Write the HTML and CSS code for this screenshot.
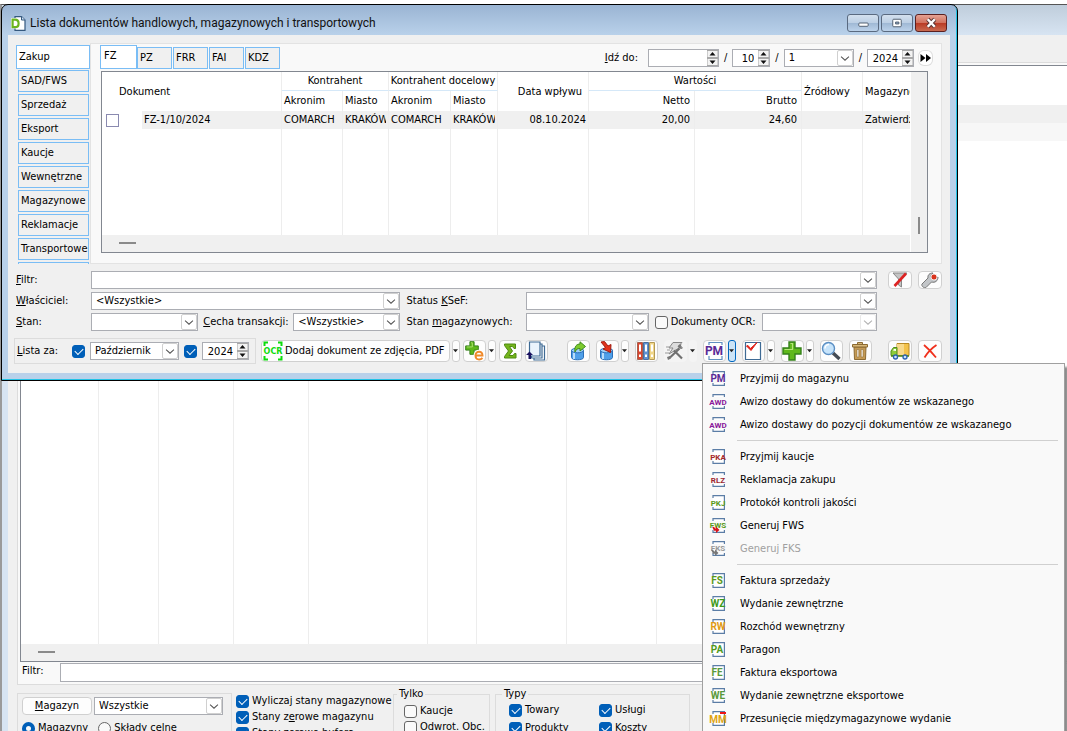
FILE: index.html
```
<!DOCTYPE html>
<html lang="pl">
<head>
<meta charset="utf-8">
<title>Lista dokumentów handlowych, magazynowych i transportowych</title>
<link rel="stylesheet" href="styles.css">
</head>
<body>
<svg class="defs" aria-hidden="true">
  <symbol id="chev" viewBox="0 0 16 16"><path d="M3.500 6.500l4.500 4 4.500-4" fill="none" stroke="#555" stroke-width="1.200"/></symbol>
  <symbol id="spin" viewBox="0 0 11 16"><path d="M0 .5h11v7H0zM0 8.500h11v7H0z" fill="#f3f3f3" stroke="#a8a8a8"/><path d="M5.500 2l3 3.500h-6zM5.500 14l3-3.500h-6z" fill="#111"/></symbol>
  <symbol id="drop" viewBox="0 0 6 4"><path d="M0 0h6L3 3.500z" fill="#222"/></symbol>
  <symbol id="page" viewBox="0 0 16 15"><path d="M3 3V.7h11.400V3M3 12v2.300h11.400V12" fill="#fff" stroke="#5b7da6" stroke-width="1.200"/></symbol>
  <symbol id="sheet" viewBox="0 0 16 15"><path d="M3 3V.7h11.400v13.600H3V12" fill="#fff" stroke="#5b7da6" stroke-width="1.200"/></symbol>
  <symbol id="plus" viewBox="0 0 20 20"><path d="M7 1h6v6h6v6h-6v6H7v-6H1V7h6z" fill="#5fb81c" stroke="#34801a" stroke-width="1.400"/><path d="M8.500 2.500h2V8.500h-8" fill="none" stroke="#b5e67a" stroke-width="1.200"/></symbol>
  <symbol id="drum" viewBox="0 0 20 20"><path d="M3.500 9v7.500c0 3 12 3 12 0V9z" fill="#4f9fe8" stroke="#2b6fb8"/><path d="M6 11v7" stroke="#b9ddfa" stroke-width="2"/><ellipse cx="9.500" cy="9.500" rx="6" ry="2.300" fill="#9fd0f8" stroke="#2b6fb8"/></symbol>
</svg>

<main class="desktop">
  <section class="back" aria-label="Lista towarów">
    <div class="back-title"></div>
    <div class="back-client">
      <div class="back-strip"></div>
      <div class="back-panel">
        <div class="back-list">
          <div class="back-head"></div><div class="back-row"></div><div class="back-row alt"></div>
          <div class="back-cols"><i></i><i></i><i></i><i></i><i></i><i></i><i></i><i></i><i></i></div>
          <div class="hscroll"><b></b></div>
        </div>
        <div class="back-filter"><label for="bf">Filtr:</label><input id="bf" type="text"></div>
      </div>
      <div class="options">
        <div class="box store">
          <div class="line"><button class="push" type="button"><u>M</u>agazyn</button>
          <span class="combo"><select aria-label="Magazyn"><option>Wszystkie</option></select><svg><use href="#chev"/></svg></span></div>
          <div class="radios"><label><input type="radio" name="m" checked>Magazyny</label><label><input type="radio" name="m">Składy celne</label></div>
        </div>
        <div class="checks">
          <label><input type="checkbox" checked>Wyliczaj stany magazynowe</label>
          <label><input type="checkbox" checked><span>Stany z<u>e</u>rowe magazynu</span></label>
          <label><input type="checkbox" checked>Stany zerowe bufora</label>
        </div>
        <fieldset class="only"><legend>Tylko</legend>
          <label><input type="checkbox">Kaucje</label>
          <label><input type="checkbox">Odwrot. Obc.</label>
        </fieldset>
        <fieldset class="types"><legend>Typy</legend>
          <label><input type="checkbox" checked>Towary</label><label><input type="checkbox" checked>Usługi</label>
          <label><input type="checkbox" checked>Produkty</label><label><input type="checkbox" checked>Koszty</label>
        </fieldset>
      </div>
    </div>
  </section>

  <section class="win">
    <header class="title">
      <svg class="logo" viewBox="0 0 15 15"><path d="M4 .6h6.500L14 4v10.400H4z" fill="#fff" stroke="#35597f" stroke-width="1.200"/><path d="M10.500 .6V4H14" fill="#c9dcf0" stroke="#35597f"/><path d="M0 2h5c7 0 7 10.500 0 10.500H0z" fill="#fff"/><path d="M1.600 3.600H4c4.800 0 4.800 7.600 0 7.600H1.600z" fill="none" stroke="#6cb51f" stroke-width="2.200"/></svg>
      <h1>Lista dokumentów handlowych, magazynowych i transportowych</h1>
      <button class="cap" type="button" aria-label="Minimalizuj"><svg viewBox="0 0 30 17"><rect x="10.500" y="8.500" width="10" height="3.500" rx="1" fill="#fff" stroke="#4c5a6b"/></svg></button>
      <button class="cap" type="button" aria-label="Maksymalizuj"><svg viewBox="0 0 30 17"><rect x="10.500" y="4.500" width="9" height="8" rx="1" fill="#fff" stroke="#4c5a6b"/><path d="M13.500 7.500h3.500v2h-3.500z" fill="#8fa9c6" stroke="#4c5a6b"/></svg></button>
      <button class="cap close" type="button" aria-label="Zamknij"><svg viewBox="0 0 30 17"><path d="M11.500 4.500l7.500 8M19 4.500l-7.500 8" stroke="#533" stroke-width="4.400"/><path d="M11.500 4.500l7.500 8M19 4.500l-7.500 8" stroke="#fff" stroke-width="2.600"/></svg></button>
    </header>
    <div class="client">
      <div class="work">
        <nav class="side">
          <button class="on" type="button">Zakup</button><button type="button">SAD/FWS</button><button type="button">Sprzedaż</button><button type="button">Eksport</button><button type="button">Kaucje</button><button type="button">Wewnętrzne</button><button type="button">Magazynowe</button><button type="button">Reklamacje</button><button type="button">Transportowe</button><button type="button" aria-label="Dalej"></button>
        </nav>
        <div class="panel">
          <div class="tabs">
            <button class="on" type="button">FZ</button><button type="button">PZ</button><button type="button">FRR</button><button type="button">FAI</button><button type="button">KDZ</button>
            <div class="goto">
              <label for="g1"><u>I</u>dź do:</label>
              <span class="spin w1"><input id="g1" type="text"><svg><use href="#spin"/></svg></span><span>/</span>
              <span class="spin w2"><input aria-label="Miesiąc" type="text" value="10"><svg><use href="#spin"/></svg></span><span>/</span>
              <span class="combo w3"><select aria-label="Seria"><option>1</option></select><svg><use href="#chev"/></svg></span><span>/</span>
              <span class="spin w4"><input aria-label="Rok" type="text" value="2024"><svg><use href="#spin"/></svg></span>
              <button class="go" type="button" aria-label="Przejdź"><svg viewBox="0 0 13 14"><path d="M1.500 3l5 4-5 4zM7 3l5 4-5 4z" fill="#000"/></svg></button>
            </div>
          </div>
          <div class="list">
            <div class="rows">
              <table>
                <colgroup><col class="c0"><col class="c1"><col class="c2"><col class="c3"><col class="c4"><col class="c5"><col class="c6"><col class="c7"><col class="c8"><col class="c9"><col></colgroup>
                <thead>
                  <tr><th rowspan="2" colspan="2" class="doc">Dokument</th><th colspan="2" class="grp">Kontrahent</th><th colspan="2" class="grp">Kontrahent docelowy</th><th rowspan="2" class="date">Data wpływu</th><th colspan="2" class="grp">Wartości</th><th rowspan="2">Źródłowy</th><th rowspan="2">Magazynowy</th></tr>
                  <tr><th>Akronim</th><th>Miasto</th><th>Akronim</th><th>Miasto</th><th class="num">Netto</th><th class="num">Brutto</th></tr>
                </thead>
                <tbody>
                  <tr class="data"><td class="tick"><input class="old" type="checkbox" aria-label="FZ-1/10/2024"></td><td>FZ-1/10/2024</td><td>COMARCH</td><td><div class="clip">KRAKÓW</div></td><td>COMARCH</td><td><div class="clip">KRAKÓW</div></td><td class="date">08.10.2024</td><td class="num">20,00</td><td class="num">24,60</td><td></td><td>Zatwierdzony</td></tr>
                  <tr class="rest"><td></td><td></td><td></td><td></td><td></td><td></td><td></td><td></td><td></td><td></td><td></td></tr>
                </tbody>
              </table>
              <div class="hscroll"><b></b></div>
            </div>
            <div class="vscroll"><b></b></div>
          </div>
        </div>
      </div>

      <form class="form">
        <label for="f1"><u>F</u>iltr:</label>
        <span class="combo wide"><select id="f1"><option></option></select><svg><use href="#chev"/></svg></span>
        <span class="pair">
          <button class="tool" type="button" aria-label="Wyczyść filtr"><svg viewBox="0 0 20 16"><path d="M3 1h14l-5.500 6v8l-3-2V7z" fill="#c4c4c4" stroke="#888"/><path d="M4.500 14L16 1.500" stroke="#d22" stroke-width="2.600"/></svg></button>
          <button class="tool" type="button" aria-label="Konstruktor filtra"><svg viewBox="0 0 20 16"><path d="M2 12l6-6c-.5-3 1.500-5 5-5l-2 3 1 2.500 3 .5 3-2c0 4-3 6-6.500 5L6 15.500c-2 1-5-1.500-4-3.500z" fill="#c2c5c8" stroke="#777"/><circle cx="14" cy="5" r="3" fill="#d9331c" stroke="#fff" stroke-width=".8"/></svg></button>
        </span>
        <label for="f2"><u>W</u>łaściciel:</label>
        <span class="combo"><select id="f2"><option>&lt;Wszystkie&gt;</option></select><svg><use href="#chev"/></svg></span>
        <label class="second" for="f3">Status <u>K</u>SeF:</label>
        <span class="combo"><select id="f3"><option></option></select><svg><use href="#chev"/></svg></span><span></span>
        <label for="f4"><u>S</u>tan:</label>
        <span class="split"><span class="combo"><select id="f4"><option></option></select><svg><use href="#chev"/></svg></span><label class="feature" for="f5"><u>C</u>echa transakcji:</label><span class="combo"><select id="f5"><option>&lt;Wszystkie&gt;</option></select><svg><use href="#chev"/></svg></span></span>
        <label class="second" for="f6">Stan <u>m</u>agazynowych:</label>
        <span class="split stock"><span class="combo"><select id="f6"><option></option></select><svg><use href="#chev"/></svg></span><label class="ocr"><input type="checkbox">Dokumenty OCR:</label><span class="combo off"><select aria-label="Dokumenty OCR" disabled><option></option></select><svg><use href="#chev"/></svg></span></span>
      </form>

      <div class="toolbar">
        <div class="box period">
          <span class="cap-label"><u>L</u>ista za:</span><input type="checkbox" aria-label="Miesiąc" checked>
          <span class="combo"><select aria-label="Miesiąc"><option>Październik</option></select><svg><use href="#chev"/></svg></span>
          <input type="checkbox" aria-label="Rok" checked>
          <span class="spin w4"><input aria-label="Rok" type="text" value="2024"><svg><use href="#spin"/></svg></span>
        </div>
        <div class="set first">
          <span class="duo">
          <button class="tool text" type="button"><svg viewBox="0 0 20 20"><path d="M1.500 5V1.500H5M15 1.500h3.500V5M1.500 15v3.500H5M15 18.500h3.500V15" fill="none" stroke="#0ddb0d" stroke-width="2"/><text x="10" y="13" class="ocr-t">OCR</text></svg>Dodaj dokument ze zdjęcia, PDF</button>
          <button class="arr" type="button" aria-label="Więcej"><svg><use href="#drop"/></svg></button></span>
          <span class="duo">
          <button class="tool" type="button" aria-label="Dodaj e-dokument"><svg viewBox="0 0 20 20"><use href="#plus" x="1" y="0" width="14" height="14"/><path d="M11.500 14.500h7c0-5-7-5-7 0s5 4.500 7 2.500" fill="none" stroke="#fff" stroke-width="4"/><path d="M11.500 14.500h7c0-5-7-5-7 0s5 4.500 7 2.500" fill="none" stroke="#f08a2b" stroke-width="1.900"/></svg></button>
          <button class="arr" type="button" aria-label="Więcej"><svg><use href="#drop"/></svg></button></span>
          <button class="tool" type="button" aria-label="Suma"><svg viewBox="0 0 20 20"><path d="M5 3h10.500v4.500h-1.500L12.500 5.500H9.500l3 4.500-3.500 4.500h4l1.500-2h1.500V17H4.500v-1.500L8.500 10 4.500 4.500V3z" fill="#74b51c" stroke="#4e8a12"/></svg></button>
          <button class="tool" type="button" aria-label="Kopie"><svg viewBox="0 0 20 20"><path d="M8 5h10.500v14H8z" fill="#fff" stroke="#3e6a94" stroke-width="1.200"/><path d="M5.500 3h10.500v14H5.500z" fill="#fff" stroke="#3e6a94" stroke-width="1.200"/><path d="M3.500 1h10.500v14H3.500z" fill="#eaf3fc" stroke="#3e6a94" stroke-width="1.200"/><path d="M3.500 10.500l3.500 3.500H5v4H2.500v-4H0z" fill="#1a1360"/></svg></button>
        </div>
        <div class="set">
          <button class="tool" type="button" aria-label="Eksportuj"><svg viewBox="0 0 20 20"><use href="#drum"/><path d="M7 11c-1-6 2-8 5-8V.8l5.500 4.700L12 10V7.500c-2 0-4 .5-5 3.500z" fill="#7ccb2e" stroke="#3f8a1c"/></svg></button>
          <span class="duo">
          <button class="tool" type="button" aria-label="Importuj"><svg viewBox="0 0 20 20"><use href="#drum"/><path d="M4 1l3.500-.5L11 5l3-1.500-.5 8L6 8l2.500-1.500z" fill="#e2341d" stroke="#a11c10"/></svg></button>
          <button class="arr" type="button" aria-label="Więcej"><svg><use href="#drop"/></svg></button></span>
          <button class="tool" type="button" aria-label="Archiwum"><svg viewBox="0 0 20 20"><path d="M1.500 1.500h5v17h-5z" fill="#d8452f" stroke="#a5604f"/><path d="M7.500 1.500h5v17h-5z" fill="#5f92d0" stroke="#4a6f9f"/><path d="M13.500 1.500h5v17h-5z" fill="#f0d68a" stroke="#b59a55"/><path d="M3 3.500h2v7H3zM9 3.500h2v7H9zM15 3.500h2v7h-2zM3 13.500h2v2.500H3zM9 13.500h2v2.500H9zM15 13.500h2v2.500h-2z" fill="#fff"/></svg></button>
          <span class="duo">
          <button class="tool flat" type="button" aria-label="Operacje"><svg viewBox="0 0 20 20"><path d="M8 1.500h9l-4 4h3.500L4 13l4-6H4z" fill="#ddd" stroke="#888"/><path d="M1 6h4M2 9h3M0 12h4" stroke="#999"/><path d="M5 16.500L14.500 7.500M9 9.500l8 8" stroke="#707070" stroke-width="2.200"/><path d="M13 6c0-2 2-3 3.500-2.500L15.500 6l2.500.5c-.5 2-3 2-5-.5zM2 16l3-1 1 2.500L3 19z" fill="#777"/></svg></button>
          <button class="arr flat" type="button" aria-label="Więcej"><svg><use href="#drop"/></svg></button></span>
          <span class="duo">
          <button class="tool" type="button" aria-label="Przyjmij do magazynu"><svg viewBox="0 0 20 20"><path d="M5 4V1.500h13V4M5 15v3.500h13V15" fill="none" stroke="#5f8fc0" stroke-width="1.200"/><text x="10" y="14" class="pm-t">PM</text></svg></button>
          <button class="arr live" type="button" aria-label="Więcej"><svg><use href="#drop"/></svg></button></span>
          <span class="duo">
          <button class="tool" type="button" aria-label="Zatwierdź"><svg viewBox="0 0 20 20"><path d="M2.500 1.500h15v17h-15z" fill="#fff" stroke="#3e6a94" stroke-width="1.200"/><path d="M3.500 5l1.500-.5 2.500 3L14 1.500 8 9.500z" fill="#e0221a" stroke="#e0221a"/></svg></button>
          <button class="arr" type="button" aria-label="Więcej"><svg><use href="#drop"/></svg></button></span>
          <span class="duo">
          <button class="tool" type="button" aria-label="Dodaj"><svg viewBox="0 0 20 20"><use href="#plus"/></svg></button>
          <button class="arr" type="button" aria-label="Więcej"><svg><use href="#drop"/></svg></button></span>
          <button class="tool" type="button" aria-label="Podgląd"><svg viewBox="0 0 20 20"><path d="M12 12l6.500 6" stroke="#444b55" stroke-width="3.400"/><circle cx="7.500" cy="7.500" r="6" fill="#c7e4fb" stroke="#5b8fc4" stroke-width="1.400"/><path d="M4 7.500c0-2.500 2-4 4-4" fill="none" stroke="#fff" stroke-width="1.500"/></svg></button>
          <button class="tool" type="button" aria-label="Usuń"><svg viewBox="0 0 20 20"><path d="M4 6h12l-.5 12.500h-11z" fill="#c49a55" stroke="#8b6a33"/><path d="M2.500 3.500h15V6h-15zM7.500 3.500v-2h5v2" fill="#d9b878" stroke="#8b6a33"/><path d="M7 8.500h1.800v7.500H7zM11.200 8.500H13v7.500h-1.800z" fill="#fff" stroke="#8b6a33" stroke-width=".6"/></svg></button>
        </div>
        <div class="pair">
          <button class="tool" type="button" aria-label="Transport"><svg viewBox="0 0 20 20"><path d="M7 2.500h12v12H7z" fill="#f3c24a" stroke="#b98a24"/><path d="M7 3h7v11H7z" fill="#f8d98a"/><path d="M1 14.500V10l2.500-3.500H7v8z" fill="#8ccb3a" stroke="#4e8a1c"/><path d="M3 9.500l1-1.500h2v2z" fill="#fff"/><path d="M1 15h18" stroke="#4e8a1c" stroke-width="1.600"/><circle cx="5.500" cy="16" r="2" fill="#cfe3fa" stroke="#2b62b0" stroke-width="1.300"/><circle cx="15" cy="16" r="2" fill="#cfe3fa" stroke="#2b62b0" stroke-width="1.300"/></svg></button>
          <button class="tool" type="button" aria-label="Zamknij"><svg viewBox="0 0 20 20"><path d="M4 4Q10 9 16 16.500M16.500 4Q9 9 4.500 16.500" fill="none" stroke="#f0301c" stroke-width="1.800"/></svg></button>
        </div>
      </div>
    </div>
  </section>

  <menu class="menu">
    <li><button type="button"><svg viewBox="0 0 16 15"><use href="#page"/><text x="8" y="11" class="two" fill="#5a2a96">PM</text></svg>Przyjmij do magazynu</button></li>
    <li><button type="button"><svg viewBox="0 0 16 15"><use href="#page"/><text x="8" y="11" class="three" fill="#8a1a9a">AWD</text></svg>Awizo dostawy do dokumentów ze wskazanego</button></li>
    <li><button type="button"><svg viewBox="0 0 16 15"><use href="#page"/><text x="8" y="11" class="three" fill="#8a1a9a">AWD</text></svg>Awizo dostawy do pozycji dokumentów ze wskazanego</button></li>
    <li class="sep"></li>
    <li><button type="button"><svg viewBox="0 0 16 15"><use href="#sheet"/><text x="8" y="11" class="three" fill="#a52a2a">PKA</text></svg>Przyjmij kaucje</button></li>
    <li><button type="button"><svg viewBox="0 0 16 15"><use href="#page"/><text x="8" y="11" class="three" fill="#9c2630">RLZ</text></svg>Reklamacja zakupu</button></li>
    <li><button type="button"><svg viewBox="0 0 16 15"><use href="#sheet"/><text x="8" y="11" class="three" fill="#5a9a1c">PKJ</text></svg>Protokół kontroli jakości</button></li>
    <li><button type="button"><svg viewBox="0 0 16 15"><use href="#page"/><text x="8" y="10" class="three" fill="#5a9a1c">FWS</text><path d="M2 8.500l2 .5 1.500 1.500H6V8.500l3.500 3.500L6 15v-2.200H4z" fill="#d8141c"/></svg>Generuj FWS</button></li>
    <li><button type="button" disabled><svg viewBox="0 0 16 15"><use href="#page"/><text x="8" y="10" class="three" fill="#999">FKS</text><path d="M1 8.500l2 .5 1.500 1.500H5V8.500L8.500 12 5 15v-2.200H3z" fill="#777"/></svg>Generuj FKS</button></li>
    <li class="sep"></li>
    <li><button type="button"><svg viewBox="0 0 16 15"><use href="#sheet"/><text x="7" y="11" class="two" fill="#5a9a1c">FS</text></svg>Faktura sprzedaży</button></li>
    <li><button type="button"><svg viewBox="0 0 16 15"><use href="#sheet"/><text x="8" y="11" class="two" fill="#3f9a1c">WZ</text></svg>Wydanie zewnętrzne</button></li>
    <li><button type="button"><svg viewBox="0 0 16 15"><use href="#sheet"/><text x="8" y="11" class="two" fill="#e09a14">RW</text></svg>Rozchód wewnętrzny</button></li>
    <li><button type="button"><svg viewBox="0 0 16 15"><use href="#sheet"/><text x="7" y="11" class="two" fill="#4f9a1c">PA</text></svg>Paragon</button></li>
    <li><button type="button"><svg viewBox="0 0 16 15"><use href="#sheet"/><text x="7" y="11" class="two" fill="#5a9a3c">FE</text></svg>Faktura eksportowa</button></li>
    <li><button type="button"><svg viewBox="0 0 16 15"><use href="#page"/><text x="8" y="11" class="two" fill="#5a9a3c">WE</text></svg>Wydanie zewnętrzne eksportowe</button></li>
    <li><button type="button"><svg viewBox="0 0 16 15"><use href="#sheet"/><text x="8" y="12" class="two" fill="#e0a414">MM</text><path d="M10 1h6v2h-6z" fill="#f01414"/></svg>Przesunięcie międzymagazynowe wydanie</button></li>
  </menu>
</main>
</body>
</html>
```
FILE: styles.css
```
* { box-sizing: border-box; }
html, body { height: 100%; margin: 0; }
body {
  overflow: hidden;
  background: #fff;
  color: #000;
  font: 11px/14px "DejaVu Sans Condensed", "Open Sans", sans-serif;
}
button, input, select { font: inherit; color: inherit; margin: 0; padding: 0; }
button { white-space: nowrap; }
label { white-space: nowrap; }
svg { display: block; flex: none; }
.defs { position: absolute; width: 0; height: 0; }
.desktop { position: relative; height: 100%; overflow: hidden; }

/* shared controls */
input[type="checkbox"], input[type="radio"] {
  appearance: none;
  flex: none;
  width: 13px;
  height: 13px;
  border: 1px solid #666;
  border-radius: 3px;
  background: #fafafa;
  display: grid;
  place-items: center;
}
input[type="checkbox"]:checked { background: #005fb8; border-color: #005fb8; }
input[type="checkbox"]:checked::before {
  content: "";
  width: 7px;
  height: 4px;
  margin-bottom: 2px;
  border: solid #fff;
  border-width: 0 0 1px 1px;
  transform: rotate(-45deg);
}
input[type="radio"] { border-radius: 50%; }
input[type="radio"]:checked { border: 4px solid #005fb8; }
input[type="checkbox"].old { border: 1px solid #8a8ab0; border-radius: 0; background: #fff; }

.combo, .spin {
  display: flex;
  align-items: center;
  min-width: 0;
  height: 18px;
  border: 1px solid #abadb3;
  background: #fff;
}
.combo select {
  appearance: none;
  flex: 1;
  min-width: 0;
  height: 16px;
  padding-left: 4px;
  border: 0;
  background: none;
}
.combo svg { width: 16px; height: 16px; border: 1px solid #d0d0d0; border-radius: 2px; }
.combo.off svg { opacity: .45; }
.spin input {
  flex: 1;
  min-width: 0;
  width: 0;
  height: 16px;
  border: 0;
  background: none;
  text-align: right;
  padding-right: 4px;
}
.spin svg { width: 11px; height: 16px; }
.w1 { width: 71px; }
.w2 { width: 38px; }
.w3 { width: 70px; }
.w4 { width: 47px; }
.hscroll { height: 17px; background: #f0f0f0; padding: 7px 17px; }
.hscroll b { display: block; width: 17px; height: 2px; background: #8a8a8a; }
.box { border: 1px solid #dcdcdc; }

/* background window */
.back {
  position: absolute;
  inset: 4px 0 0 0;
  display: flex;
  flex-direction: column;
  border-top: 1px solid #555;
  border-left: 2px solid #9a9a9a;
  background: #d7e4f2;
  padding-left: 6px;
}
.back-title { height: 30px; flex: none; background: linear-gradient(#bfcddb, #d7e4f2); }
.back-client { flex: 1; background: #f0f0f0; overflow: hidden; padding-left: 9px; }
.back-strip { height: 27px; }
.back-panel { border: 1px solid #dcdcdc; border-right: 0; background: #f9f9f9; padding: 2px 0 2px 2px; height: 623px; display: flex; flex-direction: column; }
.back-list { flex: 1; border: 1px solid #828790; border-right: 0; display: flex; flex-direction: column; background: #fff; }
.back-head { height: 39px; }
.back-row { height: 18px; background: #f0f0f0; }
.back-row.alt { background: #f7f7f7; }
.back-cols { flex: 1; display: grid; grid-template-columns: 78px 60px 75px 75px 119px 49px 90px 90px 1fr; }
.back-cols i { border-right: 1px solid #ededed; }
.back-cols i:last-child { border: 0; }
.back-filter { display: flex; height: 20px; padding-top: 1px; }
.back-filter label { width: 40px; padding: 1px 0 0 2px; }
.back-filter input { flex: 1; min-width: 0; height: 19px; border: 1px solid #abadb3; border-right: 0; background: #fff; }
.options { display: flex; align-items: flex-start; padding-top: 5px; }
.options label { display: flex; align-items: center; gap: 3px; height: 16px; }
.store { width: 215px; height: 60px; margin-top: 3px; padding: 3px 8px 0 4px; }
.line { display: flex; gap: 2px; }
.push { width: 70px; height: 18px; border: 1px solid #d0d0d0; border-radius: 4px; background: #fdfdfd; }
.line .combo { flex: 1; }
.radios { display: flex; gap: 10px; padding-top: 5px; }
.checks { width: 153px; margin-left: 4px; padding-top: 3px; }
fieldset { min-width: 0; height: 60px; margin: 0; border: 1px solid #dcdcdc; padding: 0 12px; }
legend { height: 14px; padding: 0 2px; margin-left: -7px; line-height: 13px; }
.only { width: 97px; margin-left: 4px; margin-top: -3px; padding: 2px 10px; }
.types { width: 195px; margin-left: 5px; margin-top: -3px; display: grid; grid-template-columns: 90px 1fr; align-content: start; padding: 0 13px; }
.types label { height: 18px; }

/* document window */
.win {
  position: absolute;
  inset: 4px 109px auto 1px;
  border: 1px solid #000;
  border-radius: 7px 7px 0 0;
  padding: 0 7px 7px 6px;
  background: #b9d1ea;
  background-image: linear-gradient(#9ab4d3, #b9d1ea 30px, #b9d1ea);
  box-shadow: inset -1px -1px 0 #22c3e6;
}
.title { display: flex; align-items: center; gap: 2px; height: 30px; padding: 6px 3px 0; }
.logo { width: 15px; height: 15px; margin-right: 2px; }
h1 { flex: 1; min-width: 0; margin: 0; overflow: hidden; white-space: nowrap; font: 12px/16px Roboto, sans-serif; color: #111; }
.cap { width: 32px; height: 18px; border: 1px solid #5a6a80; border-radius: 3px; background: linear-gradient(#d3e0ee, #bccfe4 50%, #9fb8d4 51%, #bcd2ea); }
.cap svg { width: 30px; height: 16px; }
.cap.close { border-color: #5a2020; background: linear-gradient(#e5a294, #d0705c 50%, #b93a24 51%, #c96a50); }
.client { padding: 8px 8px 9px; background: #f0f0f0; }
.work { display: flex; height: 221px; overflow: hidden; }
.side { width: 74px; flex: none; padding: 2px 1px 0 2px; display: flex; flex-direction: column; gap: 2px; }
.side button, .tabs > button {
  flex: none;
  border: 1px solid #7abdf5;
  background: #f0f0f0;
  text-align: left;
  height: 22px;
  padding-left: 3px;
  overflow: visible;
}
.side button { padding-left: 2px; }
.side button.on { height: 24px; margin: 0 -1px -1px -2px; background: #fff; }
.panel { flex: 1; min-width: 0; border: 1px solid #e3e3e3; background: #f9f9f9; padding: 1px 13px 10px 10px; display: flex; flex-direction: column; }
.tabs { display: flex; align-items: flex-end; gap: 1px; height: 24px; margin: 0 -4px 2px -1px; }
.tabs > button { width: 35px; height: 22px; padding-left: 2px; }
.tabs > button.on { width: 37px; height: 24px; margin-right: -1px; padding: 0 0 3px 3px; background: #fff; }
.goto { flex: 1; align-self: center; display: flex; align-items: center; justify-content: flex-end; gap: 5px; padding-top: 2px; }
.goto label { margin-right: 5px; }
.go { width: 13px; height: 14px; border: 0; border-radius: 5px; background: #fff; box-shadow: 0 0 0 1px #ddd; }
.go svg { width: 13px; height: 14px; }

.list { flex: 1; min-height: 0; display: flex; border: 1px solid #828790; background: #fff; }
.rows { flex: 1; min-width: 0; overflow: hidden; }
.vscroll { width: 17px; background: #f0f0f0; border-left: 1px solid #fff; padding: 145px 0 0 7px; }
.vscroll b { display: block; width: 2px; height: 17px; background: #8a8a8a; }
table { width: 100%; table-layout: fixed; border-collapse: separate; border-spacing: 0; }
.c0 { width: 40px; }
.c1 { width: 140px; }
.c2 { width: 61px; }
.c3 { width: 46px; }
.c4 { width: 62px; }
.c5 { width: 47px; }
.c6 { width: 91px; }
.c7 { width: 106px; }
.c8 { width: 107px; }
.c9 { width: 61px; }
th, td { padding: 0 2px; overflow: hidden; white-space: nowrap; font-weight: normal; text-align: left; border-right: 1px solid #ededed; }
th:last-child, td:last-child { border-right: 0; }
thead tr:last-child th:last-child { border-right: 1px solid #ededed; }
thead tr { height: 19px; }
thead tr + tr { height: 20px; }
.doc { padding-left: 17px; }
.grp { text-align: center; padding: 0; border-bottom: 1px solid #d5e8f8; }
th.num, td.num { text-align: right; padding-right: 4px; }
th.date, td.date { text-align: right; padding-right: 2px; }
th.date { padding-right: 6px; }
.clip { overflow: hidden; }
.data { height: 18px; }
.data td { background: #f0f0f0; }
.data td.tick { background: #fff; padding-left: 4px; border: 0; }
.rest { height: 106px; }
.rest td:first-child { border: 0; }

.form { display: grid; grid-template-columns: 75px minmax(0, 309fr) 126px minmax(0, 350fr) 65px; row-gap: 3px; align-items: center; padding-top: 7px; }
.wide { grid-column: span 3; }
.second { padding-left: 6px; }
.split { display: flex; align-items: center; }
.split .combo { flex: 1; }
.split.stock .combo { flex: 122; }
.split.stock .off { flex: 115; }
.feature { width: 95px; padding-left: 5px; }
.ocr { display: flex; align-items: center; gap: 3px; width: 113px; padding-left: 6px; }
.pair { display: flex; justify-content: flex-end; gap: 6px; margin-left: auto; }
.tool {
  width: 24px;
  height: 22px;
  display: flex;
  align-items: center;
  justify-content: center;
  border: 1px solid #d0d0d0;
  border-radius: 4px;
  background: #fdfdfd;
}
.tool svg { width: 20px; height: 20px; }
.tool.flat, .arr.flat { border-color: #f4f4f4; background: #f4f4f4; }
.form .tool { height: 18px; }
.form .tool svg { height: 16px; }
.set .tool { width: 23px; }
.set .tool.text { width: auto; flex: none; padding: 0 4px 0 1px; gap: 2px; }
.arr { width: 8px; height: 22px; display: grid; place-items: center; border: 1px solid #d0d0d0; border-radius: 3px; background: #fdfdfd; }
.arr svg { width: 5px; height: 4px; }
.arr.live { border-color: #0067c0; background: #cce4f7; }
.toolbar { display: flex; align-items: center; gap: 5px; height: 26px; margin-top: 7px; }
.period { display: flex; align-items: center; gap: 5px; width: 242px; height: 26px; flex: none; margin-left: -2px; padding: 0 6px 0 2px; }
.cap-label { width: 50px; }
.period .combo { flex: 1; }
.set { display: flex; align-items: center; gap: 6px; padding-left: 14px; }
.set.first { gap: 3px; padding-left: 0; }
.duo { display: flex; gap: 2px; }
.ocr-t { font: bold 8px "DejaVu Sans", sans-serif; fill: #0ddb0d; text-anchor: middle; }
.pm-t { font: bold 12px Roboto, sans-serif; fill: #5a2a96; text-anchor: middle; }

/* drop-down menu */
.menu {
  position: absolute;
  top: 363px;
  right: 2px;
  width: 363px;
  margin: 0;
  padding: 3px;
  list-style: none;
  border: 1px solid #a0a0a0;
  background: #f9f9f9;
  box-shadow: 3px 4px 2px #8c8c8c;
}
.menu button {
  display: flex;
  align-items: center;
  gap: 14px;
  width: 100%;
  height: 23px;
  padding-left: 4px;
  border: 0;
  background: none;
  text-align: left;
}
.menu button:disabled { color: #a0a0a0; }
.menu svg { width: 16px; height: 15px; overflow: visible; }
.sep { height: 1px; margin: 4px 3px 4px 31px; background: #d0d0d0; }
.two { font: bold 10px Roboto, sans-serif; text-anchor: middle; }
.three { font: bold 8px Roboto, sans-serif; text-anchor: middle; }
```
